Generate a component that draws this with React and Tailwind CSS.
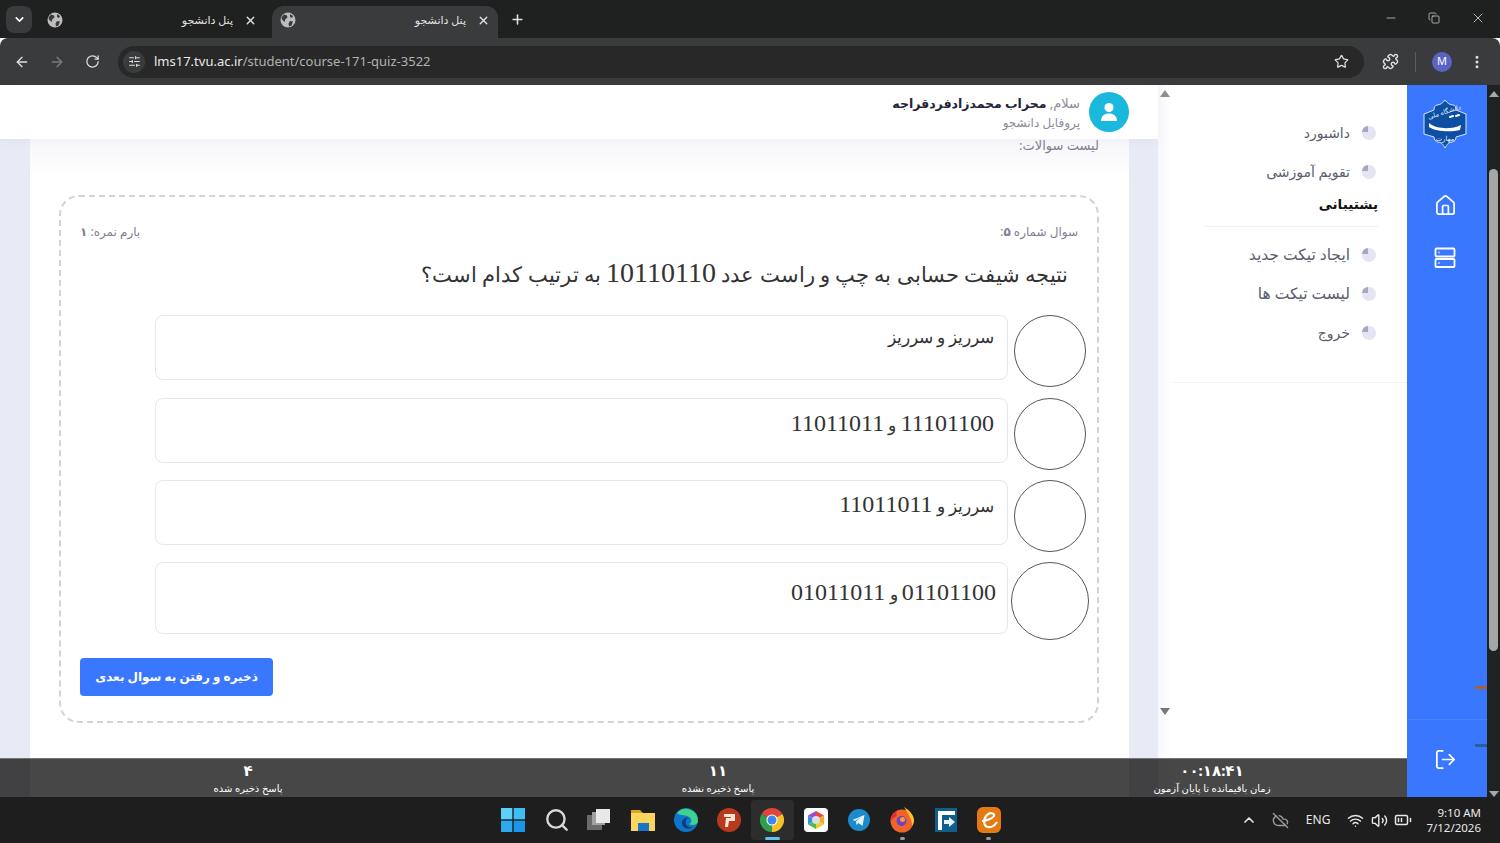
import React from 'react';
import {
  ArrowLeft, ArrowRight, RotateCw, Star, Puzzle, EllipsisVertical, Plus, X, Minus, Copy,
  ChevronDown, ChevronUp, Search, Wifi, Volume2, BatteryMedium, CloudOff, House, LogOut, SlidersHorizontal,
} from 'lucide-react';

const uiFont = "font-['Noto_Sans','DejaVu_Sans',sans-serif]";

// Tab globe
const Globe = () => (
  <svg width="16" height="16" viewBox="0 0 16 16">
    <circle cx="8" cy="8" r="7.5" fill="#bdbdbd" />
    <path d="M4 2.5l3 1 .5 2-2 1.5-1 3-2.5-2.5-.5-2zM10 9l3 .5-1.500 4-2.500 1-.5-3zM10 2l3 2-1 2-2-1z" fill="#3a3a3a" />
  </svg>
);

const Tab = ({ active }) => (
  <div className={`flex h-8 w-[226px] items-center pb-1 pl-2 pr-2 ${active ? 'rounded-t-xl bg-[#3a3b3c]' : ''}`}>
    <Globe />
    <span dir="rtl" className="ml-auto text-[11px] text-[#e2e2e2]">پنل دانشجو</span>
    <X size={13} strokeWidth={2.5} className="ml-[11px] text-[#e0e0e0]" />
  </div>
);

const BrowserChrome = () => (
  <div className={`${uiFont} shrink-0`}>
    <div className="flex h-[38px] items-end bg-[#1f2020]">
      <div className="mb-[5px] ml-[6px] flex h-[27px] w-[26px] items-center justify-center rounded-lg bg-[#3a3b3c]">
        <ChevronDown size={13} strokeWidth={3} className="text-white" />
      </div>
      <div className="ml-[7px] mr-[7px] w-[226px]"><Tab /></div>
      <Tab active />
      <Plus size={15} strokeWidth={2.5} className="mb-[11px] ml-[12px] text-[#e2e2e2]" />
      <div className="mb-[12px] ml-auto flex items-center gap-[30px] pr-[14px] text-[#e0e0e0]">
        <Minus size={14} strokeWidth={1.2} />
        <Copy size={12} strokeWidth={1.4} />
        <X size={16} strokeWidth={1.2} />
      </div>
    </div>
    <div className="flex h-[47px] items-center rounded-t-lg bg-[#3a3b3c] pl-[14px] pr-[15px] text-[#dedede]">
      <ArrowLeft size={16} />
      <ArrowRight size={16} className="ml-[19px] text-[#7d7d7d]" />
      <RotateCw size={15} className="ml-[20px]" />
      <div className="ml-[18px] flex h-[32px] w-[1246px] items-center rounded-full bg-[#282828] pl-[5px] pr-[15px]">
        <div className="flex h-[22px] w-[22px] items-center justify-center rounded-full bg-[#3a3b3c]">
          <SlidersHorizontal size={13} />
        </div>
        <span className="ml-[9px] text-[13px] text-[#e8e8e8]">lms17.tvu.ac.ir<span className="text-[#b2b2b2]">/student/course-171-quiz-3522</span></span>
        <Star size={15} strokeWidth={2} className="ml-auto" />
      </div>
      <Puzzle size={17} className="ml-[18px]" />
      <div className="ml-[16px] h-5 w-px bg-[#5c5c5c]" />
      <div className="ml-[16px] flex h-5 w-5 items-center justify-center rounded-full bg-[#5b63c4] text-[11px] text-white">M</div>
      <EllipsisVertical size={16} strokeWidth={2.5} className="ml-[17px]" />
    </div>
  </div>
);

const Header = () => (
  <div dir="rtl" className="relative z-10 flex h-[54px] shrink-0 bg-white pr-[29px] pt-[7px] shadow-[0_2px_10px_rgba(120,120,160,0.06)]">
    <div className="flex h-10 w-10 items-center justify-center rounded-full bg-[#1ab8dc]">
      <svg width="22" height="22" viewBox="0 0 22 22" fill="white">
        <circle cx="11" cy="6.5" r="4.5" />
        <path d="M3 20c0-5 3.500-7.500 8-7.500s8 2.500 8 7.500z" />
      </svg>
    </div>
    <div className="mr-[9px] pt-[1px]">
      <p className="text-[13px] leading-[20px] text-[#8a8b9c]">سلام, <b className="text-[12.5px] text-[#23243a]">محراب محمدزادفردقراجه</b></p>
      <p className="text-[12px] leading-[18px] text-[#8a8b9c]">پروفایل دانشجو</p>
    </div>
  </div>
);

// digits are drawn bigger than the arabic text, as in the picture
const Num = ({ children }) => <span className="text-[24px]">{children}</span>;

const options = [
  { label: <>سرریز و سرریز</>, pt: 'pt-[6px]', mb: 'mb-[11px]' },
  { label: <><Num>11101100</Num> و <Num>11011011</Num></>, pt: 'pt-[8px]', mb: 'mb-[10px]' },
  { label: <>سرریز و <Num>11011011</Num></>, pt: 'pt-[7px]', mb: 'mb-[10px]' },
  { label: <><Num>01101100</Num> و <Num>01011011</Num></>, pt: 'pt-[13px]', mb: '', big: true },
];

const OptionRow = ({ opt }) => (
  <div className={`flex items-start ${opt.mb}`}>
    <div className="flex w-[84px] shrink-0 justify-center">
      <div className={`${opt.big ? 'h-[78px] w-[78px]' : 'h-[72px] w-[72px]'} rounded-full border border-[#555]`} />
    </div>
    <div className={`${opt.big ? 'h-[72px] pr-[11px]' : 'h-[65px] pr-[13px]'} w-[853px] rounded-lg border border-[#e6e6ee] pl-[13px] ${opt.pt} text-[17px] leading-[32px] text-[#333] font-['Liberation_Serif','DejaVu_Serif',serif]`}>
      {opt.label}
    </div>
  </div>
);

const Quiz = () => (
  <div dir="rtl" className="flex min-h-0 flex-1 bg-[#e8eaf5] pl-[30px] pr-[29px]">
    <div className="flex-1 bg-white">
      <div className="h-[40px] bg-gradient-to-b from-[#f7f7fb] to-white pr-[30px] text-[13px] leading-[12px] text-[#7f8093]">لیست سوالات:</div>
      <div className="ml-[29px] mr-[30px] mt-[16px] h-[528px] rounded-[20px] border-2 border-dashed border-[#d2d2d8] px-[19px] pt-[25px]">
        <div className="flex justify-between text-[12px] leading-[20px] text-[#7f8093]">
          <span>سوال شماره <b>۵</b>:</span>
          <span>بارم نمره: <b>۱</b></span>
        </div>
        <h2 className="mr-[10px] mt-[9px] text-[21px] leading-[44px] text-[#333] font-['Liberation_Serif','DejaVu_Serif',serif]">
          نتیجه شیفت حسابی به چپ و راست عدد <span className="text-[28px]">10110110</span> به ترتیب کدام است؟
        </h2>
        <div className="mr-[-14px] mt-[18px]">
          {options.map((opt, i) => <OptionRow key={i} opt={opt} />)}
        </div>
        <button className="mr-auto mt-[18px] block h-[38px] w-[193px] rounded bg-[#3a77ff] text-[12px] font-bold text-white">
          ذخیره و رفتن به سوال بعدی
        </button>
      </div>
    </div>
  </div>
);

const Bullet = () => (
  <svg width="15" height="15" viewBox="0 0 15 15" className="shrink-0">
    <circle cx="8" cy="8" r="7" fill="#e4e5f2" />
    <path d="M7 1v6H1a6 6 0 0 1 6-6z" fill="#a4a8c6" />
  </svg>
);

const MenuItem = ({ label, wide }) => (
  <div className="flex h-[39px] items-center pr-[31px] text-[#5b5c6e]">
    <Bullet />
    <span className={`mr-[11px] ${wide ? 'text-[15.5px]' : 'text-[14px]'}`}>{label}</span>
  </div>
);

const Sidebar = () => (
  <div dir="rtl" className="relative flex h-full w-[249px] shrink-0 flex-col bg-white">
    <div className="ml-[14px] h-[298px] border-b border-[#f3f3f8] pt-[28px]">
      <MenuItem label="داشبورد" />
      <MenuItem label="تقویم آموزشی" />
      <div className="mr-[29px] w-[174px] border-b border-[#eff0f5] pb-[10px] pt-[1px] text-[13.5px] font-bold leading-[24px] text-[#111]">پشتیبانی</div>
      <div className="pt-[8px]">
        <MenuItem label="ایجاد تیکت جدید" wide />
        <MenuItem label="لیست تیکت ها" wide />
        <MenuItem label="خروج" />
      </div>
    </div>
    <div className="absolute bottom-0 left-0 top-0 w-[14px] bg-gradient-to-r from-[#f8f8fc] to-white" />
    {/* small inner scrollbar arrows */}
    <div className="absolute left-[2px] top-[5px] h-0 w-0 border-x-[5px] border-b-[7px] border-x-transparent border-b-[#8f8f8f]" />
    <div className="absolute left-[2px] top-[623px] h-0 w-0 border-x-[5px] border-t-[7px] border-x-transparent border-t-[#777]" />
  </div>
);

const Logo = () => (
  <svg width="44" height="50" viewBox="0 0 44 50">
    <path d="M22 1c2 3 5 5 8 5 2 0 3 2 3 5l10 4v20l-10 3c0 3-2 5-4 5-3 0-5 2-7 6-2-4-4-6-7-6-2 0-4-2-4-5L1 35V15l10-4c0-3 1-5 3-5 3 0 6-2 8-5z" fill="#0d4fa3" stroke="#d5e4f9" strokeWidth="1" />
    <path d="M6 24c7 6 22 7 32 2l-1 5c-8 2-24 2-31-3z" fill="white" />
    <path d="M27 18l3-1M33 17l3-1" stroke="white" strokeWidth="2" strokeLinecap="round" />
    <text x="22" y="15" direction="rtl" textAnchor="middle" fontSize="6.500" fill="#e6effc" transform="rotate(-18 22 15)">دانشگاه ملی</text>
    <text x="22" y="42" direction="rtl" textAnchor="middle" fontSize="7" fill="#e6effc">مهارت</text>
  </svg>
);

const Rail = () => (
  <div className="flex h-full w-[80px] shrink-0 flex-col items-center bg-[#3a77ff] pt-[14px] text-white">
    <div className="flex flex-col items-center pr-[4px]">
      <Logo />
      <House size={23} strokeWidth={1.8} className="mt-[45px]" />
      <svg width="24" height="24" viewBox="0 0 24 24" fill="none" stroke="currentColor" strokeWidth="1.8" className="mt-[29px]">
        <rect x="2.5" y="2.5" width="19" height="8" rx="1" />
        <rect x="2.5" y="13" width="19" height="8" rx="1" />
        <path d="M5.500 6.500h1M5.500 17h1" />
      </svg>
    </div>
    <div className="mt-auto flex h-[78px] w-full items-center justify-center border-t border-[#4a83ff] pr-[4px] pt-[2px]">
      <LogOut size={23} strokeWidth={1.8} />
    </div>
  </div>
);

const PageScrollbar = () => (
  <div className="relative z-40 flex h-full w-[13px] shrink-0 flex-col items-center bg-[#202122]">
    <div className="mt-[6px] h-0 w-0 border-x-[5px] border-b-[6px] border-x-transparent border-b-[#a8a8a8]" />
    <div className="mt-[72px] h-[482px] w-[9px] rounded-full bg-[#a6a6a6]" />
    <div className="mt-auto h-0 w-0 border-x-[5px] border-t-[6px] border-x-transparent border-t-[#a8a8a8]" />
    {/* find-in-page style marks that lie over the blue rail */}
    <div className="absolute right-[13px] top-[601px] h-[3px] w-[12px] bg-[#a8622f]" />
    <div className="absolute right-[13px] top-[659px] h-[3px] w-[12px] bg-[#2a5f9e]" />
  </div>
);

const Stat = ({ value, label, className }) => (
  <div className={`flex flex-col items-center text-white ${className}`}>
    <span className="text-[15px] font-bold leading-[22px]">{value}</span>
    <span dir="rtl" className="text-[10px] leading-[14px] text-white">{label}</span>
  </div>
);

const BottomBar = () => (
  <div className="absolute bottom-0 left-0 right-0 z-20 flex h-[39px] border-t border-[#777] bg-black/[0.72]">
    <Stat value="۴" label="پاسخ ذخیره شده" className="w-[496px]" />
    <Stat value="۱۱" label="پاسخ ذخیره نشده" className="w-[444px]" />
    <Stat value="۰۰:۱۸:۴۱" label="زمان باقیمانده تا پایان آزمون" className="ml-[136px] w-[272px]" />
  </div>
);

// Taskbar app icons
const WinLogo = () => (
  <svg width="24" height="24" viewBox="0 0 24 24">
    <rect x="0" y="0" width="11.3" height="11.3" fill="#5cd0f8" />
    <rect x="12.7" y="0" width="11.3" height="11.3" fill="#3fbdf5" />
    <rect x="0" y="12.7" width="11.3" height="11.3" fill="#2ea9ee" />
    <rect x="12.7" y="12.7" width="11.3" height="11.3" fill="#1c95e8" />
  </svg>
);
const TaskView = () => (
  <svg width="24" height="24" viewBox="0 0 24 24">
    <rect x="0" y="7" width="15" height="15" fill="#6a6a6a" />
    <rect x="5" y="4" width="13" height="13" fill="#a0a0a0" />
    <rect x="9" y="1" width="14" height="14" fill="#e8e8e8" />
  </svg>
);
const Folder = () => (
  <svg width="24" height="22" viewBox="0 0 24 22">
    <path d="M0 1h9l3 3h12v18H0z" fill="#d9a520" />
    <rect x="0" y="4" width="24" height="18" fill="#fbd55c" />
    <rect x="7" y="14" width="11" height="8" fill="#1776c9" />
  </svg>
);
const Edge = () => (
  <svg width="24" height="24" viewBox="0 0 24 24">
    <circle cx="12" cy="12" r="12" fill="#0f75c9" />
    <path d="M3 5a12 12 0 0 1 21 8c0 3-3 4-6 4-2 0-3-1-3-1 3-1 3-5 0-7-5-3-10-1-12-4z" fill="#3fd28e" />
    <path d="M8 15c0-4 4-6 7-5-3 0-4 3-3 6 1 2 4 4 7 3-3 3-11 2-11-4z" fill="#0a3f7a" />
  </svg>
);
const Psiphon = () => (
  <svg width="24" height="24" viewBox="0 0 24 24">
    <circle cx="12" cy="12" r="12" fill="#b8391e" />
    <path d="M7 6h11v7h-6l-1 6H8l1-9h5V9H7z" fill="#f4e7d8" />
  </svg>
);
const Chrome = () => (
  <svg width="24" height="24" viewBox="0 0 24 24">
    <path d="M12 12L1.6 6A12 12 0 0 1 22.4 6z" fill="#e0453a" />
    <path d="M12 12L22.4 6A12 12 0 0 1 12 24z" fill="#f6c026" />
    <path d="M12 12L12 24A12 12 0 0 1 1.6 6z" fill="#2f9e4d" />
    <circle cx="12" cy="12" r="5.6" fill="white" />
    <circle cx="12" cy="12" r="4.5" fill="#3f87f0" />
  </svg>
);
const HexApp = () => (
  <svg width="24" height="24" viewBox="0 0 24 24">
    <rect width="24" height="24" rx="4" fill="white" />
    <path d="M12 3l8 4.500-8 4.500z" fill="#e9473b" />
    <path d="M20 7.500v9l-8-4.500z" fill="#f4a92c" />
    <path d="M20 16.500l-8 4.500v-9z" fill="#f2cf2f" />
    <path d="M12 21l-8-4.500 8-4.500z" fill="#54b848" />
    <path d="M4 16.500v-9l8 4.500z" fill="#3b8de0" />
    <path d="M4 7.500l8-4.500v9z" fill="#a24bc9" />
    <circle cx="12" cy="12" r="4" fill="#d5dde8" />
  </svg>
);
const Telegram = () => (
  <svg width="24" height="24" viewBox="0 0 24 24">
    <circle cx="12" cy="12" r="11" fill="#1c8bc9" />
    <path d="M5.500 12l12-5-2 11-4-3-2 2-.5-3.500 5-4.500-6 4z" fill="#e8f3fa" />
  </svg>
);
const Firefox = () => (
  <svg width="24" height="26" viewBox="0 0 24 26">
    <circle cx="12" cy="14" r="11.500" fill="#f0642c" />
    <path d="M14 0c5 3 10 8 10 13 0 3-1 5-2 6 0-7-4-13-8-19z" fill="#ffc02e" />
    <path d="M1 14c0-4 2-8 6-10-1 2-1 3 0 5-3 1-5 3-6 5z" fill="#e6273f" />
    <circle cx="11.500" cy="14" r="5" fill="#6f3fc4" />
    <circle cx="12.500" cy="12.500" r="2.500" fill="#f4a030" />
  </svg>
);
const Transfer = () => (
  <svg width="22" height="24" viewBox="0 0 22 24">
    <rect width="22" height="24" fill="#0f5f8c" />
    <rect x="3" y="3" width="17" height="4" fill="white" />
    <rect x="3" y="3" width="4" height="19" fill="white" />
    <path d="M9 12h5V9l6 5-6 5v-3H9z" fill="#e6f3f9" />
  </svg>
);
const EApp = () => (
  <svg width="24" height="26" viewBox="0 0 24 26">
    <rect width="24" height="26" rx="6" fill="#e67a12" />
    <path d="M5 14c3 0 10-2 12-5 1-3-4-4-7-1-4 4-4 11 1 12 4 1 7-2 9-5" stroke="#fff" strokeWidth="2.2" fill="none" />
  </svg>
);

const TaskIcon = ({ children, active, dot }) => (
  <div className={`relative flex h-[40px] w-[43.3px] items-center justify-center rounded ${active ? 'bg-[#2d2d2d]' : ''}`}>
    {children}
    {active && <div className="absolute bottom-0 h-[3px] w-[15px] rounded-full bg-[#5cc4f2]" />}
    {dot && <div className="absolute bottom-0 h-[3px] w-[5px] rounded-full bg-[#9a9a9a]" />}
  </div>
);

const Taskbar = () => (
  <div className={`${uiFont} flex h-[46px] shrink-0 items-center bg-[#1e1e1f] pl-[491px] pr-[19px] text-[#e8e8e8]`}>
    <TaskIcon><WinLogo /></TaskIcon>
    <TaskIcon><Search size={26} strokeWidth={2.2} className="ml-[3px] text-[#d8d8d8]" /></TaskIcon>
    <TaskIcon><TaskView /></TaskIcon>
    <TaskIcon><Folder /></TaskIcon>
    <TaskIcon><Edge /></TaskIcon>
    <TaskIcon><Psiphon /></TaskIcon>
    <TaskIcon active><Chrome /></TaskIcon>
    <TaskIcon><HexApp /></TaskIcon>
    <TaskIcon><Telegram /></TaskIcon>
    <TaskIcon dot><Firefox /></TaskIcon>
    <TaskIcon><Transfer /></TaskIcon>
    <TaskIcon dot><EApp /></TaskIcon>
    <div className="ml-auto flex items-center">
      <ChevronUp size={16} strokeWidth={2.5} />
      <CloudOff size={17} className="ml-[15px] text-[#9a9a9a]" />
      <span className="ml-[17px] text-[12px]">ENG</span>
      <Wifi size={17} className="ml-[17px]" />
      <Volume2 size={17} className="ml-[7px]" />
      <BatteryMedium size={18} className="ml-[6px]" />
      <div className="ml-[14px] text-right text-[11.5px] leading-[15px]">
        <div>9:10 AM</div>
        <div>7/12/2026</div>
      </div>
    </div>
  </div>
);

export default function App() {
  return (
    <div className="flex h-[843px] w-[1500px] flex-col overflow-hidden bg-white font-['Noto_Sans','DejaVu_Sans',sans-serif]">
      <BrowserChrome />
      <div className="relative flex min-h-0 flex-1">
        <div className="flex min-w-0 flex-1 flex-col">
          <Header />
          <Quiz />
        </div>
        <Sidebar />
        <div className="relative z-30 h-full"><Rail /></div>
        <PageScrollbar />
        <div className="absolute bottom-0 left-0 h-[39px] w-[1407px]"><BottomBar /></div>
      </div>
      <Taskbar />
    </div>
  );
}
